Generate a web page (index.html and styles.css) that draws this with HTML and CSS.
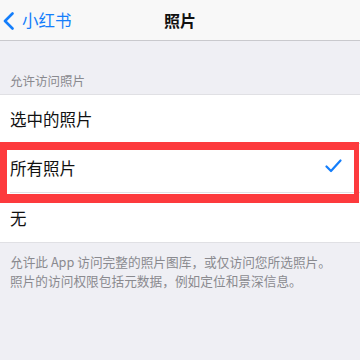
FILE: index.html
```html
<!DOCTYPE html>
<html lang="zh">
<head>
<meta charset="utf-8">
<link rel="stylesheet" href="styles.css">
</head>
<body>
<div class="screen">
  <header class="nav">
    <div class="back">
      <svg class="chev" width="11" height="18" viewBox="0 0 11 18"><path d="M9.5 1.5 L2 9 L9.5 16.5" fill="none" stroke="#147efb" stroke-width="2.6" stroke-linecap="round" stroke-linejoin="round"/></svg>
      <span class="back-text">小红书</span>
    </div>
    <div class="title">照片</div>
  </header>
  <div class="section-head">允许访问照片</div>
  <ul class="list">
    <li class="row"><span>选中的照片</span></li>
    <li class="row selected">
      <span>所有照片</span>
      <svg class="check" width="17" height="14" viewBox="0 0 17 14"><path d="M1.5 7.5 L6 12 L15.5 1.5" fill="none" stroke="#147efb" stroke-width="2.2" stroke-linecap="round" stroke-linejoin="round"/></svg>
      <div class="highlight"></div>
    </li>
    <li class="row last"><span>无</span></li>
  </ul>
  <div class="foot">
    <div class="foot-line">允许此 App 访问完整的照片图库，或仅访问您所选照片。</div>
    <div class="foot-line">照片的访问权限包括元数据，例如定位和景深信息。</div>
  </div>
</div>
</body>
</html>
```
FILE: styles.css
```css
html, body {
  margin: 0;
  padding: 0;
  background: #efeff4;
}
.screen {
  width: 360px;
  height: 360px;
  overflow: hidden;
  font-family: "Noto Sans CJK SC", "Noto Sans", sans-serif;
  background: #efeff4;
}
.nav {
  height: 40px;
  background: #f8f8f8;
  border-bottom: 1px solid #c9c9cd;
  display: flex;
  align-items: center;
  justify-content: center;
  position: relative;
}
.back {
  position: absolute;
  left: 3px;
  top: 0;
  height: 40px;
  display: flex;
  align-items: center;
  gap: 8px;
}
.chev {
  display: block;
  margin-top: 1px;
}
.back-text {
  font-size: 16.5px;
  color: #147efb;
  line-height: 20px;
}
.title {
  font-size: 16px;
  font-weight: 700;
  color: #111;
  line-height: 20px;
}
.section-head {
  height: 53px;
  box-sizing: border-box;
  padding: 32px 0 0 10px;
  font-size: 12.5px;
  line-height: 16px;
  color: #8a8a8f;
}
.list {
  list-style: none;
  margin: 0;
  padding: 0;
  background: #fff;
  border-top: 1px solid #e0e0e4;
  border-bottom: 1px solid #e0e0e4;
}
.row {
  height: 49px;
  box-sizing: border-box;
  display: flex;
  align-items: center;
  justify-content: space-between;
  margin-left: 10px;
  padding-right: 18px;
  font-size: 16.5px;
  color: #111;
  border-bottom: 1px solid #e0e0e4;
  position: relative;
}
.row.last {
  border-bottom: none;
}
.row span {
  line-height: 22px;
}
.check {
  display: block;
  margin-top: -4px;
}
.highlight {
  position: absolute;
  left: -10px;
  top: -2px;
  width: 359px;
  height: 61px;
  box-sizing: border-box;
  border-style: solid;
  border-color: #fd3a3d;
  border-width: 8px 5px 9px 7px;
  pointer-events: none;
}
.foot {
  padding: 10px 10px 0 10px;
  display: flex;
  flex-direction: column;
}
.foot-line {
  font-size: 12.7px;
  line-height: 18.5px;
  height: 18.5px;
  color: #8a8a8f;
  white-space: nowrap;
}
```
